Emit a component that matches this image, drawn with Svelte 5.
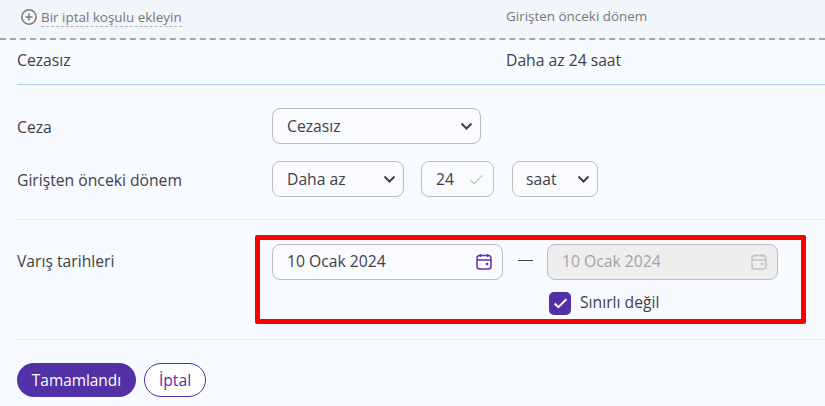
<script>
  const chevron = "M1.5 1.5 6.500 6.500l5-5";
</script>

<div class="page">
  <header class="summary-head">
    <div class="add">
      <svg class="plus" viewBox="0 0 16 16" width="16" height="16" aria-hidden="true">
        <circle cx="8" cy="8" r="7.200" />
        <path d="M8 4.500v7M4.500 8h7" />
      </svg>
      <span class="add-label">Bir iptal koşulu ekleyin</span>
    </div>
    <div class="head-col">Girişten önceki dönem</div>
  </header>

  <div class="summary-row">
    <span class="col-a">Cezasız</span>
    <span>Daha az 24 saat</span>
  </div>

  <section class="form top">
    <div class="row first">
      <div class="label">Ceza</div>
      <div class="field select w-ceza">
        <span>Cezasız</span>
        <svg class="chev" viewBox="0 0 13 8" width="13" height="8"><path d={chevron} /></svg>
      </div>
    </div>
    <div class="row second">
      <div class="label">Girişten önceki dönem</div>
      <div class="controls">
        <div class="field select w-less">
          <span>Daha az</span>
          <svg class="chev" viewBox="0 0 13 8" width="13" height="8"><path d={chevron} /></svg>
        </div>
        <div class="field w-num">
          <span>24</span>
          <svg class="ok" viewBox="0 0 16 12" width="15" height="11"><path d="M1.500 6.500 5.500 10.500 14.500 1.500" /></svg>
        </div>
        <div class="field select w-unit">
          <span>saat</span>
          <svg class="chev" viewBox="0 0 13 8" width="13" height="8"><path d={chevron} /></svg>
        </div>
      </div>
    </div>
  </section>

  <section class="form dates">
    <div class="label">Varış tarihleri</div>
    <div class="date-col">
      <div class="date-row">
        <div class="field date">
          <span class="date-text">10 Ocak 2024</span>
          <svg class="cal" viewBox="0 0 16 17" width="16" height="17">
            <rect x="1" y="2.500" width="14" height="13.500" rx="2.800" />
            <path d="M1 7h14M4.500 1v3M11.500 1v3" />
            <circle class="dot" cx="11" cy="11" r="1.300" />
          </svg>
        </div>
        <span class="dash"></span>
        <div class="field date off">
          <span class="date-text">10 Ocak 2024</span>
          <svg class="cal" viewBox="0 0 16 17" width="16" height="17">
            <rect x="1" y="2.500" width="14" height="13.500" rx="2.800" />
            <path d="M1 7h14M4.500 1v3M11.500 1v3" />
            <circle class="dot" cx="11" cy="11" r="1.300" />
          </svg>
        </div>
      </div>
      <label class="check">
        <span class="box">
          <svg viewBox="0 0 14 12" width="15" height="13"><path d="M1.500 6 5 9.500 12.500 2" /></svg>
        </span>
        <span class="check-text">Sınırlı değil</span>
      </label>
    </div>
    <div class="highlight"></div>
  </section>

  <footer class="actions">
    <button class="primary">Tamamlandı</button>
    <button class="ghost">İptal</button>
  </footer>
</div>

<style>
  :global(body) {
    margin: 0;
    background: #f7fafe;
  }
  .page {
    width: 825px;
    height: 406px;
    overflow: hidden;
    font-family: "Open Sans", "Noto Sans", sans-serif;
    font-size: 15.7px;
    color: #3f3f46;
    background: #f7fafe;
    box-sizing: border-box;
  }
  .summary-head {
    display: flex;
    box-sizing: border-box;
    background: #f2f5fa;
    border-bottom: 2px dashed #a8a8a8;
    height: 40px;
    font-size: 13.450px;
    color: #77777c;
  }
  .add {
    width: 506px;
    padding: 9px 0 0 21px;
    box-sizing: border-box;
    display: flex;
    align-items: flex-start;
    gap: 4px;
  }
  .plus {
    fill: none;
    stroke: #77777c;
    stroke-width: 1.500;
  }
  .add-label {
    line-height: 16px;
    padding-bottom: 1px;
    border-bottom: 1px dashed #b5b5b8;
  }
  .head-col {
    padding-top: 8px;
    line-height: 16px;
  }
  .summary-row {
    display: flex;
    margin-left: 17px;
    height: 45px;
    box-sizing: border-box;
    padding-top: 10px;
    line-height: 20px;
    border-bottom: 1px solid #a9cdf0;
  }
  .col-a {
    width: 489px;
  }
  .form {
    margin-left: 17px;
  }
  .top {
    height: 135px;
    box-sizing: border-box;
    border-bottom: 1px solid #e6e8ec;
    padding-top: 23px;
  }
  .row {
    display: flex;
    align-items: center;
  }
  .first .label {
    padding-top: 2px;
  }
  .second {
    margin-top: 17px;
  }
  .second .label {
    padding-top: 2px;
  }
  .label {
    width: 255px;
    flex: none;
    line-height: 20px;
  }
  .controls {
    display: flex;
    gap: 17px;
  }
  .controls .w-num {
    margin-right: 1px;
  }
  .field {
    height: 36px;
    box-sizing: border-box;
    border: 1px solid #bdbdbd;
    border-radius: 8px;
    display: flex;
    align-items: center;
    justify-content: space-between;
    padding: 0 14px;
    background: #f9fbfe;
  }
  .select {
    padding-right: 7px;
  }
  .w-ceza { width: 209px; }
  .w-less { width: 132px; }
  .w-num { width: 73px; padding-right: 9px; }
  .w-unit { width: 86px; padding-left: 13px; }
  .chev {
    fill: none;
    stroke: #3f3f46;
    stroke-width: 2;
  }
  .ok {
    fill: none;
    stroke: #a5d6a0;
    stroke-width: 1.400;
  }
  .dates {
    position: relative;
    height: 120px;
    box-sizing: border-box;
    border-bottom: 1px solid #e6e8ec;
    padding-top: 24px;
    display: flex;
  }
  .dates > .label {
    padding-top: 7px;
  }
  .date-row {
    display: flex;
    align-items: center;
  }
  .date {
    width: 231px;
    padding-right: 10px;
  }
  .date-text {
    margin-bottom: 2px;
  }
  .cal {
    fill: none;
    stroke: #5a35a8;
    stroke-width: 1.500;
    margin-bottom: 2px;
  }
  .cal .dot {
    fill: #5a35a8;
    stroke: none;
  }
  .off {
    background: #eeeeee;
    color: #a3a3a3;
  }
  .off .cal {
    stroke: #c4c4c4;
  }
  .off .cal .dot {
    fill: #c4c4c4;
    stroke: none;
  }
  .dash {
    width: 15px;
    height: 1px;
    margin: 0 14px 3px 15px;
    background: #3f3f46;
  }
  .check {
    display: flex;
    align-items: center;
    gap: 9px;
    margin: 11px 0 0 277px;
    line-height: 22px;
  }
  .check-text {
    margin-bottom: 3px;
  }
  .box {
    width: 22px;
    height: 23px;
    border-radius: 5px;
    background: #5230a5;
    display: flex;
    align-items: center;
    justify-content: center;
  }
  .box svg {
    fill: none;
    stroke: #fff;
    stroke-width: 1.800;
  }
  .highlight {
    position: absolute;
    left: 238px;
    top: 15px;
    width: 551px;
    height: 89px;
    box-sizing: border-box;
    border: 5px solid #fe0000;
    border-radius: 2px;
    pointer-events: none;
  }
  .actions {
    display: flex;
    gap: 8px;
    margin: 23px 0 0 17px;
  }
  button {
    font: inherit;
    height: 34px;
    border-radius: 17px;
    padding: 0;
  }
  .primary {
    width: 119px;
    background: #5230a5;
    border: 0;
    color: #fff;
    font-weight: 500;
    font-size: 15.400px;
  }
  .ghost {
    width: 62px;
    background: #fff;
    border: 1px solid #5230a5;
    color: #5230a5;
  }
</style>
